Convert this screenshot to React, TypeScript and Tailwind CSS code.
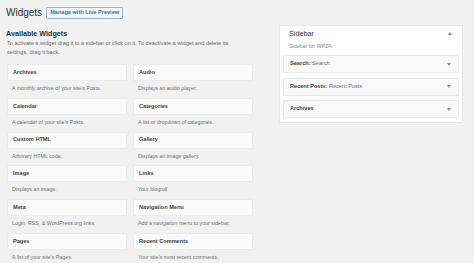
import React from "react";

const widgets: [string, string][] = [
  ["Archives", "A monthly archive of your site\u2019s Posts."],
  ["Audio", "Displays an audio player."],
  ["Calendar", "A calendar of your site\u2019s Posts."],
  ["Categories", "A list or dropdown of categories."],
  ["Custom HTML", "Arbitrary HTML code."],
  ["Gallery", "Displays an image gallery."],
  ["Image", "Displays an image."],
  ["Links", "Your blogroll"],
  ["Meta", "Login, RSS, & WordPress.org links."],
  ["Navigation Menu", "Add a navigation menu to your sidebar."],
  ["Pages", "A list of your site\u2019s Pages."],
  ["Recent Comments", "Your site\u2019s most recent comments."],
];

function Tri({ up }: { up?: boolean }) {
  return (
    <svg width="4" height="3" viewBox="0 0 4 3" className="block">
      {up ? <polygon points="0,3 4,3 2,0" fill="#8c8f94" /> : <polygon points="0,0 4,0 2,3" fill="#8c8f94" />}
    </svg>
  );
}

function Row({ bold, rest }: { bold: string; rest?: string }) {
  return (
    <div className="h-[18px] flex items-center justify-between pl-[6px] pr-[7px] bg-[#f9f9f9] border border-[#e8e8e8] text-[5.6px] leading-none">
      <div>
        <span className="font-bold text-[#3c434a]">{bold}</span>
        {rest && <span className="text-[#6b7075]"> {rest}</span>}
      </div>
      <Tri />
    </div>
  );
}

export default function App() {
  return (
    <div className="w-[474px] h-[263px] bg-[#f1f1f1] overflow-hidden flex font-['Liberation_Sans',Arial,sans-serif] text-[#23282d]">
      <div className="pl-[7px] w-[253px] shrink-0">
        <div className="pt-[7px] h-[19px] flex items-center gap-[4px]">
          <span className="text-[10px] leading-[12px] text-[#2c3338] -ml-[1px]">Widgets</span>
          <span className="h-[12px] px-[3px] flex items-center border border-[#8ab8d2] bg-[#f3f5f6] rounded-[1px] text-[5.6px] font-bold text-[#1b7fae] leading-none">
            Manage with Live Preview
          </span>
        </div>
        <div className="mt-[9.5px] text-[7.2px] font-bold leading-[9px] -ml-[1px] text-[#2c3338]">Available Widgets</div>
        <div className="mt-[1px] text-[5.6px] leading-[9px] text-[#646970]">
          <div className="whitespace-nowrap">To activate a widget drag it to a sidebar or click on it. To deactivate a widget and delete its</div>
          <div className="whitespace-nowrap">settings, drag it back.</div>
        </div>
        <div className="mt-[7.5px] grid grid-cols-[120px_120px] gap-x-[6px] w-[246px]">
          {widgets.map(([t, d]) => (
            <div key={t} className="h-[33.8px]">
              <div className="h-[17px] bg-[#fafafa] border border-[#ebebeb] flex items-center pl-[5px] text-[5.6px] font-bold leading-none text-[#3c434a]">
                {t}
              </div>
              <div className="pt-[2px] pl-[5px] text-[5.3px] leading-[10px] text-[#6b7075] whitespace-nowrap">{d}</div>
            </div>
          ))}
        </div>
      </div>
      <div className="ml-[26px] mt-[25px] w-[184px] h-[98px] bg-white border border-[#e8e8e8] px-[3px] pb-[4px] flex flex-col">
        <div className="mt-[4px] h-[9px] flex items-center justify-between pl-[6px] pr-[7px]">
          <span className="text-[7.2px] leading-none text-[#2c3338]">Sidebar</span>
          <Tri up />
        </div>
        <div className="mt-[5px] h-[8px] pl-[6px] flex items-center text-[5.3px] text-[#7e8489] leading-none">Sidebar for WPZA.</div>
        <div className="mt-[5px] flex flex-col gap-[4.5px]">
          <Row bold="Search:" rest="Search" />
          <Row bold="Recent Posts:" rest="Recent Posts" />
          <Row bold="Archives" />
        </div>
      </div>
    </div>
  );
}
